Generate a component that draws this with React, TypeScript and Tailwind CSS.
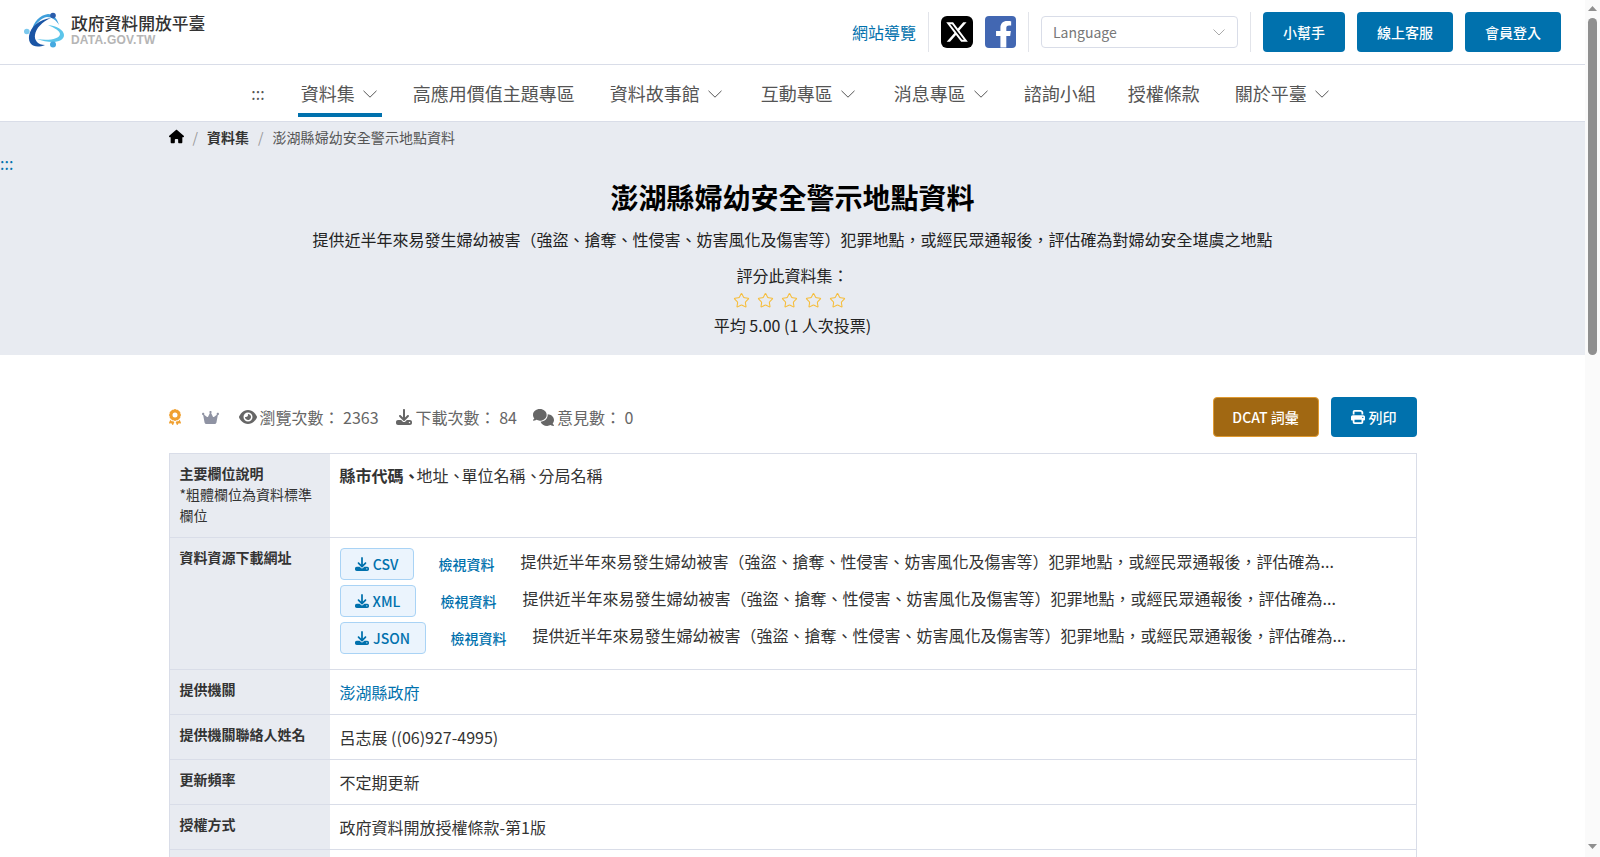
import React from "react";
import { Star } from "lucide-react";
import { FaHouse, FaEye, FaDownload, FaComments, FaPrint, FaCrown, FaAward } from "react-icons/fa6";

const Chevron = () => (
  <svg width="14" height="8" viewBox="0 0 14 8" fill="none" stroke="#555" strokeWidth="1" className="mt-px shrink-0">
    <path d="M.5.8 7 7.2 13.500.8" />
  </svg>
);

const Nav = ({ label, chevron, active, ml }: { label: string; chevron?: boolean; active?: boolean; ml: string }) => (
  <div className={`flex h-[43px] items-center ${ml} border-b-4 ${chevron ? "gap-2 pl-[3px] pr-[5px]" : "px-[3px]"} ${active ? "border-[#0071ad]" : "border-transparent"} text-[18px] text-[#555]`}>
    <span>{label}</span>
    {chevron && <Chevron />}
  </div>
);

const HeadBtn = ({ label, w }: { label: string; w: string }) => (
  <button className={`flex h-10 ${w} items-center justify-center rounded bg-[#0071ad] text-sm font-medium text-white`}>{label}</button>
);

const Logo = () => (
  <svg width="40" height="40" viewBox="0 0 40 40" className="shrink-0">
    <path d="M24 13C33 14 40 18 40 23C40 31 26 32 13 27C24 29 36 27 36 22C36 19 31 16 24 13Z" fill="#5cc5ea" />
    <path d="M8 19C9 10 16 3 24 2C29 2 33 6 35 13C32 8 28 5 23 5C17 6 12 11 8 19Z" fill="#3f9fdc" />
    <path d="M27 6C16 7 6 15 5 24C4 33 11 37 21 33C14 33 10 28 11 23C12 16 18 10 27 6Z" fill="#1a55a5" />
    <circle cx="29" cy="3.500" r="2.800" fill="#2a5cab" />
    <circle cx="2.800" cy="19.500" r="2.800" fill="#7cc9ee" />
    <circle cx="29" cy="32.500" r="3" fill="#45a9e0" />
  </svg>
);

const Row = ({ label, children, h, pt = "pt-2.5" }: { label: React.ReactNode; children?: React.ReactNode; h: string; pt?: string }) => (
  <div className={`flex ${h} border-b border-[#d9dde8]`}>
    <div className="w-[160px] shrink-0 bg-[#e8ebf1] px-2.5 pt-[9px] text-sm leading-[21px] text-[#333]">{label}</div>
    <div className={`min-w-0 flex-1 pl-2.5 ${pt} leading-6 text-[#333]`}>{children}</div>
  </div>
);

const DESC = "提供近半年來易發生婦幼被害（強盜、搶奪、性侵害、妨害風化及傷害等）犯罪地點，或經民眾通報後，評估確為...";

const Res = ({ fmt, w }: { fmt: string; w: string }) => (
  <div className="flex h-[37px] items-start">
    <div className={`flex h-8 ${w} items-center justify-center gap-1 rounded border border-[#a9d3f5] bg-[#ebf4fd] text-sm font-medium text-[#0071ad]`}>
      <FaDownload size={14} />
      {fmt}
    </div>
    <a className="ml-[25px] mt-1.5 text-sm font-medium leading-5 text-[#0071ad]">檢視資料</a>
    <span className="ml-[26px] mt-px text-base leading-6 text-[#333]">{DESC}</span>
  </div>
);

const Comma = () => <span className="inline-block w-[13px]">、</span>;

export default function App() {
  return (
    <div className="flex h-screen overflow-hidden bg-white text-base text-[#333]" style={{ fontFamily: '"Noto Sans CJK TC", "Noto Sans", sans-serif' }} lang="zh-TW">
      <div className="min-w-0 flex-1">
        <header className="flex h-[65px] items-center justify-between border-b border-[#d9dde8] pl-6 pr-6">
          <div className="flex items-center gap-[7px]">
            <Logo />
            <div className="-mt-[5px]">
              <div className="text-[16.8px] font-medium leading-[21px] text-[#333]">政府資料開放平臺</div>
              <div className="text-xs font-bold leading-3 tracking-[0.2px] text-[#b5b5b5]" style={{ fontFamily: '"Liberation Sans", sans-serif' }}>DATA.GOV.TW</div>
            </div>
          </div>
          <div className="flex items-center">
            <a className="text-base text-[#0071ad]">網站導覽</a>
            <div className="ml-3 h-10 w-px bg-[#e2e4ea]" />
            <div className="ml-3 flex size-8 items-center justify-center rounded-md bg-black">
              <svg width="24" height="24" viewBox="0 0 24 24" fill="#fff"><path d="M18.244 2.25h3.308l-7.227 8.26 8.502 11.24H16.170l-5.214-6.817L4.990 21.750H1.680l7.730-8.835L1.254 2.250H8.080l4.713 6.231zm-1.161 17.520h1.833L7.084 4.126H5.117z" /></svg>
            </div>
            <div className="ml-3 flex h-8 w-[31px] items-end justify-center overflow-hidden rounded-sm bg-[#4267b2]">
              <svg width="31" height="32" viewBox="0 0 32 32" fill="#fff"><path d="M22 32V20h4l.7-5H22v-3c0-1.500.7-2.600 2.800-2.600H27V5c-.7-.1-2.400-.3-4.200-.3-4.200 0-6.900 2.500-6.900 7.100V15h-4.500v5h4.500v12z" /></svg>
            </div>
            <div className="ml-3 h-10 w-px bg-[#e2e4ea]" />
            <div className="ml-3 flex h-8 w-[197px] items-center justify-between rounded border border-[#d9dde8] pl-[11px] pr-3 text-sm text-[#777]">
              <span>Language</span>
              <svg width="12" height="7" viewBox="0 0 12 7" fill="none" stroke="#aaa" strokeWidth="1"><path d="M.5.5 6 6 11.500.5" /></svg>
            </div>
            <div className="ml-3 h-10 w-px bg-[#e2e4ea]" />
            <div className="ml-3 flex gap-3">
              <HeadBtn label="小幫手" w="w-[82px]" />
              <HeadBtn label="線上客服" w="w-[96px]" />
              <HeadBtn label="會員登入" w="w-[96px]" />
            </div>
          </div>
        </header>
        <nav className="flex h-[57px] items-start justify-center border-b border-[#d9dde8] pt-[9px]">
          <span className="mr-[33px] flex h-[43px] items-center pb-[5px] text-[#555]">:::</span>
          <Nav label="資料集" chevron active ml="ml-0" />
          <Nav label="高應用價值主題專區" ml="ml-[28px]" />
          <Nav label="資料故事館" chevron ml="ml-[29px]" />
          <Nav label="互動專區" chevron ml="ml-[31px]" />
          <Nav label="消息專區" chevron ml="ml-[31px]" />
          <Nav label="諮詢小組" ml="ml-[28px]" />
          <Nav label="授權條款" ml="ml-[26px]" />
          <Nav label="關於平臺" chevron ml="ml-[29px]" />
        </nav>
        <section className="h-[233px] bg-[#e8ebf1]">
          <div className="mx-auto flex h-[29px] w-[1248px] items-center text-sm text-[#555]">
            <FaHouse size={15} className="text-black" />
            <span className="mx-[9px] text-[#999]">/</span>
            <span className="font-bold text-[#333]">資料集</span>
            <span className="mx-[9px] text-[#999]">/</span>
            <span className="tracking-[0.05px]">澎湖縣婦幼安全警示地點資料</span>
          </div>
          <div className="h-6 text-base leading-6 text-[#0071ad]">:::</div>
          <h1 className="mt-0.5 text-center text-[28px] font-bold leading-10 text-black">澎湖縣婦幼安全警示地點資料</h1>
          <p className="mt-2.5 text-center text-base leading-6 text-[#222]">提供近半年來易發生婦幼被害（強盜、搶奪、性侵害、妨害風化及傷害等）犯罪地點，或經民眾通報後，評估確為對婦幼安全堪虞之地點</p>
          <p className="mt-3 text-center text-base leading-6 text-[#222]">評分此資料集：</p>
          <div className="mt-px flex h-6 items-center justify-center gap-[7px] pr-1.5">
            {[0, 1, 2, 3, 4].map((i) => <Star key={i} size={17} strokeWidth={1.5} className="text-[#f6bd3b]" />)}
          </div>
          <p className="mt-px text-center text-base leading-6 text-[#222]">平均 5.00 (1 人次投票)</p>
        </section>
        <main className="mx-auto w-[1248px]">
          <div className="flex items-center justify-between pb-4 pt-[42px] text-[#666]">
            <div className="flex items-center">
              <FaAward size={16} className="-ml-0.5 text-[#f0a030]" />
              <FaCrown size={17} className="ml-[19px] text-[#8f93a3]" />
              <FaEye size={18} className="ml-5" />
              <span className="ml-[3px]">瀏覽次數： 2363</span>
              <FaDownload size={16} className="ml-[17px]" />
              <span className="ml-1">下載次數： 84</span>
              <FaComments size={21} className="ml-4" />
              <span className="ml-[3px]">意見數： 0</span>
            </div>
            <div className="flex gap-3">
              <button className="flex h-10 w-[106px] items-center justify-center rounded border border-[#e09a30] bg-[#a16812] text-sm font-medium text-white">DCAT 詞彙</button>
              <button className="flex h-10 w-[86px] items-center justify-center gap-1 rounded bg-[#0071ad] text-sm font-medium text-white"><FaPrint size={14} />列印</button>
            </div>
          </div>
          <div className="border border-b-0 border-[#d9dde8]">
            <Row h="h-[84px]" pt="pt-[9px]" label={<><b className="font-bold">主要欄位說明</b><br />*粗體欄位為資料標準欄位</>}>
              <b className="font-bold">縣市代碼<Comma /></b>地址<Comma />單位名稱<Comma />分局名稱
            </Row>
            <Row h="h-[132px]" label={<b className="font-bold">資料資源下載網址</b>}>
              <Res fmt="CSV" w="w-[74px]" />
              <Res fmt="XML" w="w-[76px]" />
              <Res fmt="JSON" w="w-[86px]" />
            </Row>
            <Row h="h-[45px]" label={<b className="font-bold">提供機關</b>}><a className="text-[#0071ad]">澎湖縣政府</a></Row>
            <Row h="h-[45px]" label={<b className="font-bold">提供機關聯絡人姓名</b>}>呂志展 ((06)927-4995)</Row>
            <Row h="h-[45px]" label={<b className="font-bold">更新頻率</b>}>不定期更新</Row>
            <Row h="h-[45px]" label={<b className="font-bold">授權方式</b>}>政府資料開放授權條款-第1版</Row>
            <Row h="h-[45px]" label={null} />
          </div>
        </main>
      </div>
      <div className="flex w-[15px] shrink-0 flex-col items-center justify-between bg-[#fafafa]">
        <div className="flex w-full flex-col items-center">
          <svg width="9" height="5" viewBox="0 0 9 5" fill="#8f8f8f" className="mt-1.5"><path d="M4.500 0 9 5H0z" /></svg>
          <div className="mt-[7px] h-[337px] w-[9px] rounded-full bg-[#8f8f8f]" />
        </div>
        <svg width="9" height="5" viewBox="0 0 9 5" fill="#8f8f8f" className="mb-2"><path d="M4.500 5 9 0H0z" /></svg>
      </div>
    </div>
  );
}
